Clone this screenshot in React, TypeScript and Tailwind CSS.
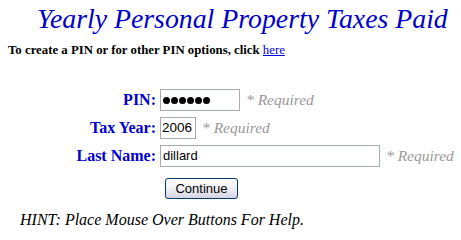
import React from "react";

const serif = { fontFamily: '"Liberation Serif", "Times New Roman", serif' };
const sans = { fontFamily: '"Liberation Sans", Arial, sans-serif' };

function Required() {
  return (
    <span className="ml-[6px] text-[15.5px] italic leading-none text-[#999999]" style={serif}>
      * Required
    </span>
  );
}

function Label({ children }: { children: React.ReactNode }) {
  return (
    <div className="flex h-[22px] items-center justify-end pr-[4px] text-[16px] font-bold leading-none text-[#0000cc]" style={serif}>
      {children}
    </div>
  );
}

export default function App() {
  return (
    <div className="relative h-[232px] w-[461px] overflow-hidden bg-white text-black">
      <div className="pl-[37px] pt-[3px] text-[27.8px] italic leading-[32px] text-[#0000cc]" style={serif}>
        Yearly Personal Property Taxes Paid
      </div>
      <div className="pl-[8px] pt-[8px] text-[12.8px] leading-[15px]" style={serif}>
        <span className="font-bold">To create a PIN or for other PIN options, click </span>
        <a href="#" className="text-[#0000ee] underline">here</a>
      </div>

      <div className="mt-[31px] grid grid-cols-[160px_auto] gap-y-[6px]">
        <Label>PIN:</Label>
        <div className="flex h-[22px] items-center">
          <div className="flex h-[22px] w-[80px] items-center gap-[1px] border border-[#a5acb2] bg-white pl-[2px]">
            {[0, 1, 2, 3, 4, 5].map((i) => (
              <span key={i} className="h-[7px] w-[7px] rounded-full bg-black" />
            ))}
          </div>
          <Required />
        </div>

        <Label>Tax Year:</Label>
        <div className="flex h-[22px] items-center">
          <div className="flex h-[22px] w-[36px] items-center border border-[#a5acb2] bg-white pl-[1px] text-[13.5px]" style={sans}>
            2006
          </div>
          <Required />
        </div>

        <Label>Last Name:</Label>
        <div className="flex h-[22px] items-center">
          <div className="flex h-[22px] w-[220px] items-center border border-[#a5acb2] bg-white pl-[2px] text-[13px]" style={sans}>
            dillard
          </div>
          <Required />
        </div>
      </div>

      <div className="mt-[11px] pl-[165px]">
        <button
          className="flex h-[21px] w-[73px] items-center justify-center rounded-[3px] border border-[#003c74] bg-gradient-to-b from-white via-[#f0f0f4] to-[#d6d3e4] text-[13px] leading-none text-black"
          style={sans}
        >
          Continue
        </button>
      </div>

      <div className="pl-[20px] pt-[12px] text-[16px] italic leading-[18px]" style={serif}>
        HINT: Place Mouse Over Buttons For Help.
      </div>
    </div>
  );
}
